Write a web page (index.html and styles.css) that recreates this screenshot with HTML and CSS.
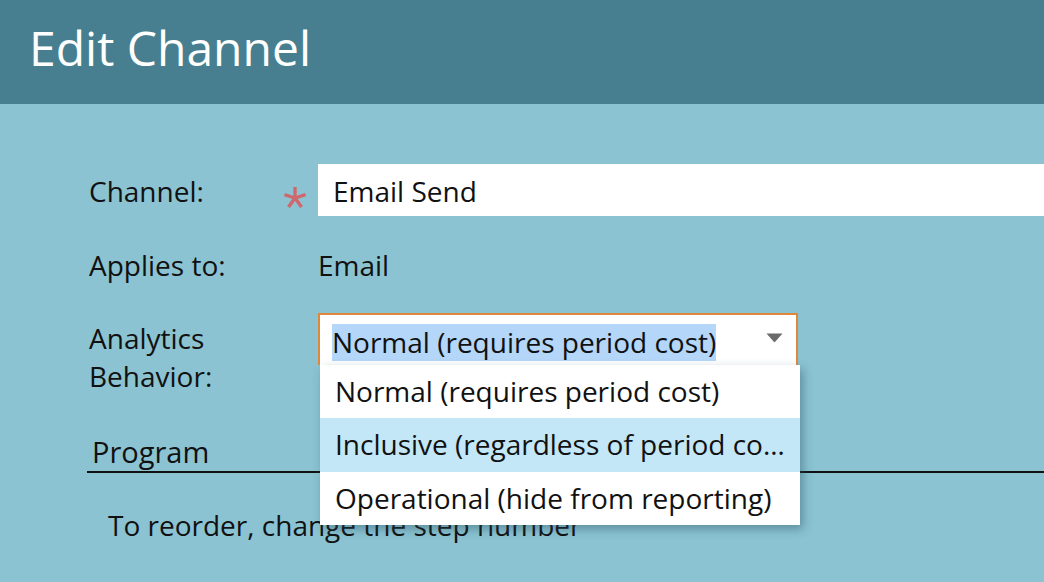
FILE: index.html
```html
<!DOCTYPE html>
<html>
<head>
<meta charset="utf-8">
<link rel="stylesheet" href="styles.css">
</head>
<body>
<div class="header"><h1 class="title">Edit Channel</h1></div>
<div class="content">
  <div class="row row-channel">
    <div class="label">Channel:<span class="req"><svg width="24" height="24" viewBox="-12 -12 24 24"><g stroke="#d0676c" stroke-width="3.4" stroke-linecap="butt"><line x1="0" y1="0" x2="0" y2="-11"/><line x1="0" y1="0" x2="10.5" y2="-3.4"/><line x1="0" y1="0" x2="6.5" y2="8.9"/><line x1="0" y1="0" x2="-6.5" y2="8.9"/><line x1="0" y1="0" x2="-10.5" y2="-3.4"/></g></svg></span></div>
    <div class="input">Email Send</div>
  </div>
  <div class="row row-applies">
    <div class="label">Applies to:</div>
    <div class="value">Email</div>
  </div>
  <div class="row row-analytics">
    <div class="label">Analytics<br>Behavior:</div>
    <div class="select-wrap">
      <div class="select"><span class="sel-text">Normal (requires period cost)</span><svg class="arrow" width="17" height="10" viewBox="0 0 17 10"><path d="M0.5 0.5 H16.5 L9.2 8.8 Q8.5 9.6 7.8 8.8 Z" fill="#6b6b6b"/></svg></div>
      <div class="menu">
        <div class="opt">Normal (requires period cost)</div>
        <div class="opt active">Inclusive (regardless of period co…</div>
        <div class="opt">Operational (hide from reporting)</div>
      </div>
    </div>
  </div>
  <div class="section">Program</div>
  <div class="note">To reorder, change the step number</div>
</div>
</body>
</html>
```
FILE: styles.css
```css
html, body {
  margin: 0;
  padding: 0;
}
body {
  width: 1044px;
  height: 582px;
  overflow: hidden;
  background: #8bc3d2;
  font-family: "Open Sans", "DejaVu Sans", sans-serif;
  color: #111;
}
.header {
  box-sizing: border-box;
  height: 104px;
  background: #477f91;
  padding-left: 29px;
  padding-top: 24px;
}
.title {
  margin: 0;
  font-weight: 400;
  font-size: 48px;
  color: #fff;
  line-height: 48px;
}
.content {
  padding-left: 89px;
  padding-top: 60px;
  font-size: 28px;
}
.row {
  display: flex;
  align-items: flex-start;
}
.label {
  width: 229px;
  flex: none;
  position: relative;
  line-height: 38px;
}
.row-channel .label {
  padding-top: 8px;
}
.req {
  position: absolute;
  left: 194px;
  top: 22px;
  width: 24px;
  height: 24px;
}
.req svg { display: block; }
.input {
  flex: 1;
  height: 52px;
  background: #fff;
  padding-left: 15px;
  line-height: 54px;
  margin-right: -40px;
}
.row-applies {
  margin-top: 30px;
  line-height: 38px;
}
.row-analytics {
  margin-top: 29px;
}
.row-analytics .label {
  padding-top: 6px;
}
.select-wrap {
  position: relative;
  width: 480px;
}
.select {
  box-sizing: border-box;
  height: 52px;
  border: 2px solid #e0883a;
  border-bottom: none;
  background: #fff;
  padding: 8px 0 0 12px;
  position: relative;
}
.sel-text {
  background: #b3d6f9;
  line-height: 37px;
  display: inline-block;
}
.arrow {
  position: absolute;
  right: 13px;
  top: 18px;
}
.menu {
  position: absolute;
  left: 2px;
  top: 52px;
  width: 480px;
  background: #fff;
  box-shadow: 3px 4px 9px rgba(40, 80, 95, 0.45);
  z-index: 2;
}
.opt {
  height: 53.33px;
  line-height: 53px;
  padding-left: 15px;
  white-space: nowrap;
}
.opt.active {
  background: #c4e7f8;
}
.section {
  margin-top: 38px;
  margin-left: -2px;
  padding-left: 5px;
  font-size: 29px;
  line-height: 38px;
  border-bottom: 2px solid #111;
}
.note {
  margin-top: 33px;
  padding-left: 19px;
  line-height: 38px;
}
```
